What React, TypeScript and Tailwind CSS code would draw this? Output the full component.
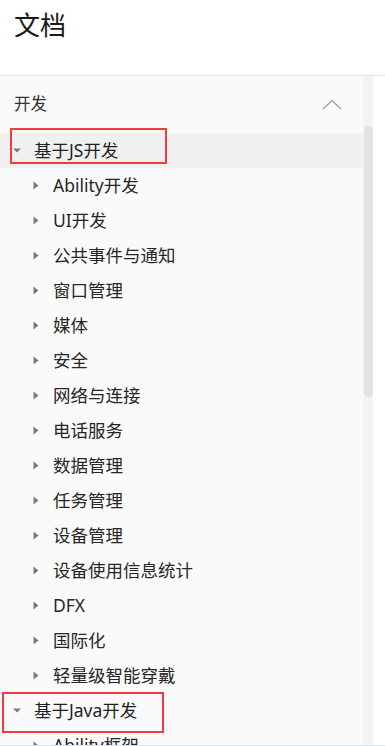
import React from "react"

const jsItems = [
  "Ability开发",
  "UI开发",
  "公共事件与通知",
  "窗口管理",
  "媒体",
  "安全",
  "网络与连接",
  "电话服务",
  "数据管理",
  "任务管理",
  "设备管理",
  "设备使用信息统计",
  "DFX",
  "国际化",
  "轻量级智能穿戴",
]

function CaretRight() {
  return (
    <svg width="6" height="9" viewBox="0 0 6 9" className="shrink-0">
      <path d="M0.5 0.5 L5.5 4.5 L0.5 8.5 Z" fill="#7a7a7a" />
    </svg>
  )
}

function CaretDown() {
  return (
    <svg width="8" height="5" viewBox="0 0 8 5" className="shrink-0">
      <path d="M0 0.5 L8 0.5 L4 4.5 Z" fill="#7a7a7a" />
    </svg>
  )
}

function ChildRow({ label }: { label: string }) {
  return (
    <div className="flex items-center h-[35px] pl-[33px]">
      <CaretRight />
      <span className="ml-[14px] text-[17.5px] text-[#262626] whitespace-nowrap">{label}</span>
    </div>
  )
}

export default function App() {
  return (
    <div
      className="relative w-[385px] h-[746px] overflow-hidden bg-white flex flex-col"
      style={{ fontFamily: '"Noto Sans", "Noto Sans CJK SC", sans-serif' }}
    >
      {/* header */}
      <div className="h-[76px] shrink-0 border-b border-[#e3e3e3] pl-[14px] pt-[6px]">
        <h1 className="text-[26px] leading-[38px] text-[#1a1a1a]">文档</h1>
      </div>

      {/* nav panel */}
      <div className="flex flex-1 min-h-0 border-b border-[#dbe5ef]">
        <div className="w-[363px] bg-[#fafafa] overflow-hidden">
          <div className="flex items-center justify-between h-[57px] pl-[14px] pr-[21px]">
            <span className="text-[16.5px] text-[#333]">开发</span>
            <svg width="20" height="11" viewBox="0 0 20 11">
              <path d="M1 10 L10 1.5 L19 10" fill="none" stroke="#a8a8a8" strokeWidth="1.6" />
            </svg>
          </div>

          <div className="flex items-center h-[35px] pl-[13px] bg-[#f0f0f0]">
            <CaretDown />
            <span className="ml-[13px] text-[17.5px] text-[#1f1f1f]">基于JS开发</span>
          </div>
          {jsItems.map((item) => (
            <ChildRow key={item} label={item} />
          ))}

          <div className="flex items-center h-[35px] pl-[13px]">
            <CaretDown />
            <span className="ml-[13px] text-[17.5px] text-[#1f1f1f]">基于Java开发</span>
          </div>
          <ChildRow label="Ability框架" />
        </div>

        {/* scrollbar */}
        <div className="w-[10px] bg-[#f3f3f3]">
          <div className="mt-[50px] mx-auto w-[9px] h-[271px] rounded-full bg-[#e2e2e2]" />
        </div>
        <div className="flex-1 bg-white" />
      </div>

      {/* annotation boxes */}
      <div className="absolute left-[10px] top-[128px] w-[157px] h-[36px] border-2 border-[#f03c3c]" />
      <div className="absolute left-[2px] top-[692px] w-[162px] h-[41px] border-2 border-[#f03c3c]" />
    </div>
  )
}
